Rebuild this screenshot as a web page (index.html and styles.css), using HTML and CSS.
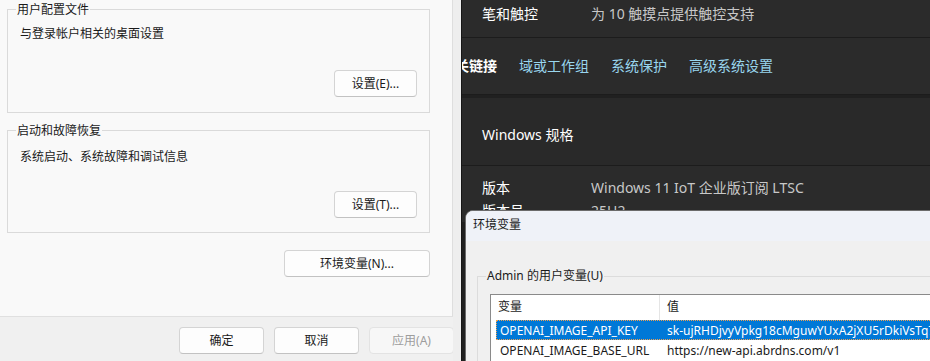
FILE: index.html
```html
<!DOCTYPE html>
<html lang="zh-CN">
<head>
  <meta charset="UTF-8">
  <title>系统属性 - 环境变量</title>
  <link rel="stylesheet" href="styles.css">
</head>
<body>
  <div class="desktop">

    <!-- System properties dialog (left) -->
    <div class="sysprop">
      <div class="sysprop-body">
        <div class="group group-profile">
          <span class="group-title">用户配置文件</span>
          <p class="group-desc">与登录帐户相关的桌面设置</p>
          <div class="group-actions">
            <button class="btn">设置(E)...</button>
          </div>
        </div>

        <div class="group group-startup">
          <span class="group-title">启动和故障恢复</span>
          <p class="group-desc">系统启动、系统故障和调试信息</p>
          <div class="group-actions">
            <button class="btn">设置(T)...</button>
          </div>
        </div>

        <div class="env-row">
          <button class="btn btn-env">环境变量(N)...</button>
        </div>
      </div>

      <div class="sysprop-footer">
        <button class="btn btn-foot">确定</button>
        <button class="btn btn-foot">取消</button>
        <button class="btn btn-foot" disabled>应用(A)</button>
      </div>
    </div>

    <div class="gap-strip"></div>

    <!-- Settings > About (dark, right) -->
    <div class="settings">
      <div class="card row-pen">
        <span class="label">笔和触控</span>
        <span class="value">为 10 触摸点提供触控支持</span>
      </div>
      <div class="card links">
        <span class="links-title">相关链接</span>
        <a class="link">域或工作组</a>
        <a class="link">系统保护</a>
        <a class="link">高级系统设置</a>
      </div>

      <div class="card spec">
        <div class="spec-head">Windows 规格</div>
        <div class="spec-rows">
          <div class="spec-row">
            <span class="label">版本</span>
            <span class="value">Windows 11 IoT 企业版订阅 LTSC</span>
          </div>
          <div class="spec-row">
            <span class="label">版本号</span>
            <span class="value">25H2</span>
          </div>
        </div>
      </div>
    </div>

    <!-- Environment variables dialog (front) -->
    <div class="envdlg">
      <div class="envdlg-title">环境变量</div>
      <div class="envdlg-body">
        <div class="group group-user">
          <span class="group-title">Admin 的用户变量(U)</span>
          <div class="listview">
            <div class="lv-head">
              <span class="col-name">变量</span>
              <span class="col-value">值</span>
            </div>
            <div class="lv-row selected">
              <span class="col-name">OPENAI_IMAGE_API_KEY</span>
              <span class="col-value">sk-ujRHDjvyVpkg18cMguwYUxA2jXU5rDkiVsTq7mWb</span>
            </div>
            <div class="lv-row">
              <span class="col-name">OPENAI_IMAGE_BASE_URL</span>
              <span class="col-value">https://new-api.abrdns.com/v1</span>
            </div>
          </div>
        </div>
      </div>
    </div>

  </div>
</body>
</html>
```

FILE: styles.css
```css
/* General */
body {
  margin: 0;
  background: #202020;
  font-family: "Noto Sans", "Noto Sans CJK SC", sans-serif;
  font-size: 12px;
  color: #1a1a1a;
}

.desktop {
  position: relative;
  width: 930px;
  height: 361px;
  overflow: hidden;
}

p {
  margin: 0;
}

/* Buttons */
.btn {
  font-family: inherit;
  font-size: 12px;
  color: #1a1a1a;
  height: 27px;
  background: #fdfdfd;
  border: 1px solid #d4d4d4;
  border-bottom-color: #c2c2c2;
  border-radius: 4px;
  padding: 0;
  line-height: 25px;
}

.btn:disabled {
  color: #9d9d9d;
  background: #f7f7f7;
  border-color: #e3e3e3;
}

/* Group boxes */
.group {
  position: relative;
  border: 1px solid #dadada;
}

.group-title {
  position: absolute;
  top: -8px;
  left: 8px;
  padding: 0 1px;
  line-height: 16px;
  background: #f9f9f9;
}

.group-desc {
  line-height: 16px;
  padding-left: 12px;
}

.group-actions {
  display: flex;
  justify-content: flex-end;
  padding-right: 12px;
}

.group-actions .btn {
  width: 83px;
}

/* System properties */
.sysprop {
  position: absolute;
  left: 0;
  top: 0;
  width: 452px;
  height: 361px;
  background: #f9f9f9;
  border-right: 1px solid #dedede;
  display: flex;
  flex-direction: column;
}

.sysprop-body {
  flex: 1;
  padding: 9px 0 0 7px;
}

.sysprop .group {
  width: 421px;
}

.group-profile {
  padding: 16px 0 15px;
}

.group-profile .group-actions {
  margin-top: 28px;
}

.group-startup {
  margin-top: 17px;
  padding: 18px 0 14px;
}

.group-startup .group-actions {
  margin-top: 26px;
}

.env-row {
  width: 423px;
  display: flex;
  justify-content: flex-end;
  margin-top: 17px;
}

.btn-env {
  width: 146px;
}

.sysprop-footer {
  height: 45px;
  background: #f0f0f0;
  border-top: 1px solid #e0e0e0;
  display: flex;
  justify-content: flex-end;
  gap: 10px;
  padding: 10px 0 0;
  box-sizing: border-box;
  margin-right: -2px;
}

.btn-foot {
  width: 85px;
}

.gap-strip {
  position: absolute;
  left: 453px;
  top: 0;
  width: 8px;
  height: 361px;
  background: #eeeeee;
}

/* Dark settings window */
.settings {
  position: absolute;
  left: 461px;
  top: 0;
  width: 469px;
  height: 361px;
  background: #202020;
  border-left: 1px solid #161616;
  overflow: hidden;
  color: #ffffff;
  font-size: 14px;
}

.card {
  background: #2b2b2b;
}

.label {
  width: 109px;
  flex-shrink: 0;
}

.value {
  color: #c8c8c8;
}

.row-pen {
  display: flex;
  height: 38px;
  padding: 4px 0 0 20px;
  line-height: 20px;
  box-sizing: border-box;
  border-bottom: 1px solid #1c1c1c;
}

.links {
  height: 57px;
  display: flex;
  align-items: center;
  gap: 22px;
  margin-left: -21px;
  padding-bottom: 2px;
  box-sizing: border-box;
  border-bottom: 1px solid #1c1c1c;
}

.links-title {
  font-weight: bold;
}

.link {
  color: #99d6ee;
}

.spec {
  margin-top: 3px;
}

.spec-head {
  height: 68px;
  line-height: 68px;
  padding: 3px 0 0 20px;
  box-sizing: border-box;
  background: #292929;
  border-bottom: 1px solid #1c1c1c;
}

.spec-rows {
  padding: 10px 0 0 20px;
}

.spec-row {
  display: flex;
  line-height: 23px;
}

/* Environment variables dialog */
.envdlg {
  position: absolute;
  left: 465px;
  top: 210px;
  width: 480px;
  height: 160px;
  background: #f0f0f0;
  border: 1px solid #6b6b6b;
  border-radius: 8px 8px 0 0;
  overflow: hidden;
}

.envdlg-title {
  height: 30px;
  line-height: 28px;
  padding-left: 7px;
  background: #eff2f8;
}

.envdlg-body {
  padding: 35px 0 0 11px;
}

.envdlg .group {
  border-color: #dcdcdc;
  border-right: none;
  padding: 17px 0 0 12px;
  height: 100px;
}

.envdlg .group-title {
  background: #f0f0f0;
  left: 8px;
  top: -9px;
}

.listview {
  background: #ffffff;
  border: 1px solid #8a8a8a;
  border-right: none;
  height: 90px;
}

.lv-head {
  display: flex;
  height: 25px;
  line-height: 24px;
}

.lv-head .col-name {
  width: 161px;
  border-right: 1px solid #e5e5e5;
}

.col-name {
  width: 160px;
  padding-left: 7px;
  flex-shrink: 0;
}

.col-value {
  padding-left: 7px;
  white-space: nowrap;
}

.lv-row {
  display: flex;
  height: 20px;
  line-height: 19px;
  margin-left: 5px;
  box-sizing: border-box;
  border: 1px dotted transparent;
}

.lv-row .col-name {
  width: 156px;
  padding-left: 3px;
}

.lv-row .col-value {
  padding-left: 11px;
}

.lv-row.selected {
  background: #0078d7;
  color: #ffffff;
  border-color: #f0a050;
}
```
